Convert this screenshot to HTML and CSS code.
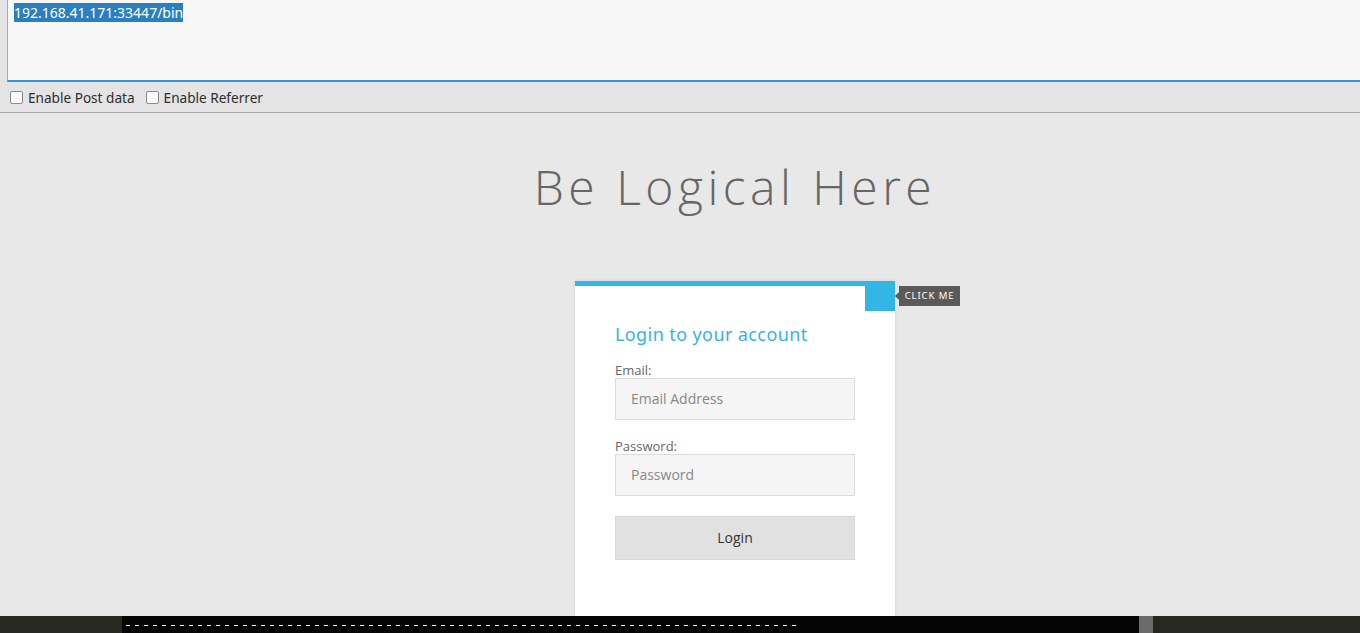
FILE: index.html
```html
<!DOCTYPE html>
<html>
<head>
<meta charset="utf-8">
<title>Be Logical Here</title>
<link rel="stylesheet" href="styles.css">
</head>
<body>
<div class="toolbar">
  <div class="url-box"><span class="url-sel">192.168.41.171:33447/bin</span></div>
  <div class="options">
    <label class="opt"><span class="cb"></span>Enable Post data</label>
    <label class="opt"><span class="cb"></span>Enable Referrer</label>
  </div>
</div>
<div class="main">
  <h1 class="title">Be Logical Here</h1>
  <div class="card">
    <div class="corner"></div>
    <div class="tip">CLICK ME</div>
    <h2 class="card-title">Login to your account</h2>
    <div class="field">
      <div class="label">Email:</div>
      <div class="input">Email Address</div>
    </div>
    <div class="field">
      <div class="label">Password:</div>
      <div class="input">Password</div>
    </div>
    <div class="btn">Login</div>
  </div>
</div>
<div class="dock">
  <div class="dock-left"></div>
  <div class="dock-term"><div class="dashes"></div></div>
  <div class="dock-thumb"></div>
  <div class="dock-right"></div>
</div>
</body>
</html>
```

FILE: styles.css
```css
html, body {
  margin: 0;
  padding: 0;
  height: 100%;
  overflow: hidden;
}
body {
  background: #e8e8e8;
  font-family: "Noto Sans", "Open Sans", sans-serif;
}
.toolbar {
  background: #e4e4e4;
  border-bottom: 1px solid #a9a9a9;
}
.url-box {
  margin-left: 7px;
  height: 82px;
  box-sizing: border-box;
  background: #f7f7f7;
  border-left: 1px solid #9aaab8;
  border-bottom: 2px solid #3391d9;
  padding: 4px 6px 0 6px;
  font-size: 14px;
  line-height: 17px;
}
.url-sel {
  background: #2a7fc1;
  color: #fff;
}
.options {
  height: 30px;
  display: flex;
  align-items: center;
  padding-left: 10px;
  gap: 11px;
  font-size: 13.6px;
  color: #2e2e2e;
}
.opt {
  display: flex;
  align-items: center;
}
.cb {
  width: 11px;
  height: 11px;
  border: 1px solid #8a8a8a;
  border-radius: 2px;
  background: #fcfcfc;
  margin-right: 5px;
}
.main {
  display: flex;
  flex-direction: column;
  align-items: center;
  padding-left: 110px;
}
.title {
  margin: 41px 0 0 0;
  font-family: "Open Sans", sans-serif;
  font-weight: 300;
  font-size: 48px;
  line-height: 65px;
  letter-spacing: 4.5px;
  color: #666;
}
.card {
  position: relative;
  margin-top: 62px;
  width: 320px;
  box-sizing: border-box;
  background: #fff;
  border-top: 5px solid #33b5e5;
  box-shadow: 0 0 3px rgba(0, 0, 0, 0.12);
  padding: 36px 40px 80px 40px;
}
.corner {
  position: absolute;
  top: 0;
  right: 0;
  width: 30px;
  height: 25px;
  background: #33b5e5;
}
.tip {
  position: absolute;
  top: 0;
  left: 324px;
  width: 61px;
  height: 20px;
  box-sizing: border-box;
  background: #5a5a5a;
  color: #fff;
  font-family: "Noto Sans", sans-serif;
  font-size: 9.5px;
  letter-spacing: 0.9px;
  line-height: 20px;
  text-align: center;
}
.tip::before {
  content: "";
  position: absolute;
  left: -4px;
  top: 6px;
  border-top: 4px solid transparent;
  border-bottom: 4px solid transparent;
  border-right: 4px solid #5a5a5a;
}
.card-title {
  margin: 0;
  font-family: "Noto Sans", sans-serif;
  font-weight: 400;
  font-size: 18px;
  line-height: 24px;
  letter-spacing: 0.4px;
  color: #33b5e5;
}
.field {
  margin-top: 16px;
}
.field + .field {
  margin-top: 18px;
}
.label {
  font-size: 13px;
  line-height: 16px;
  color: #666;
  font-family: "Open Sans", sans-serif;
}
.input {
  height: 42px;
  box-sizing: border-box;
  border: 1px solid #dcdcdc;
  background: #f5f5f5;
  padding-left: 15px;
  line-height: 40px;
  font-size: 14px;
  color: #888;
  font-family: "Open Sans", sans-serif;
}
.btn {
  margin-top: 20px;
  height: 44px;
  box-sizing: border-box;
  border: 1px solid #d8d8d8;
  background: #e1e1e1;
  text-align: center;
  line-height: 42px;
  font-size: 14px;
  color: #333;
  font-family: "Open Sans", sans-serif;
}
.dock {
  position: fixed;
  left: 0;
  right: 0;
  bottom: 0;
  height: 17px;
  display: flex;
}
.dock-left {
  width: 122px;
  background: #272822;
}
.dock-term {
  width: 1017px;
  background: #050505;
  padding: 9px 0 0 4px;
  box-sizing: border-box;
}
.dashes {
  width: 670px;
  height: 1px;
  background: repeating-linear-gradient(90deg, #fff 0 4px, transparent 4px 9px);
}
.dock-thumb {
  width: 14px;
  background: #6b6b6b;
}
.dock-right {
  flex: 1;
  background: #272822;
}
```
